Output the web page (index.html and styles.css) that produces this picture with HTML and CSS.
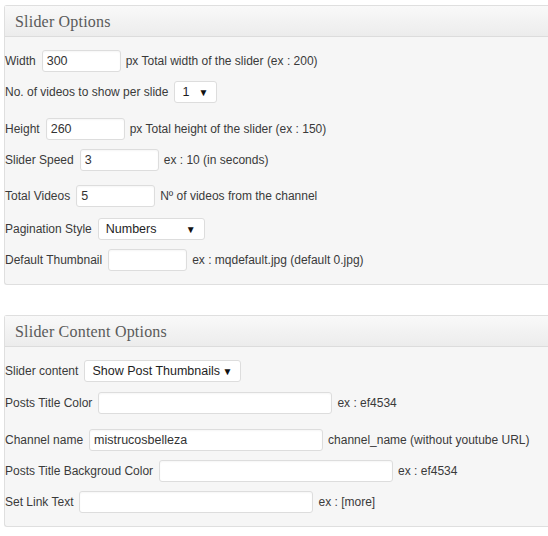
FILE: index.html
```html
<!DOCTYPE html>
<html>
<head>
<meta charset="utf-8">
<link rel="stylesheet" href="styles.css">
</head>
<body>
<div class="page">
  <div class="panel">
    <div class="panel-head">Slider Options</div>
    <div class="panel-body p1">
      <div class="row r-first"><span class="lbl">Width</span><span class="input short">300</span><span class="hint">px Total width of the slider (ex : 200)</span></div>
      <div class="row g9"><span class="lbl">No. of videos to show per slide</span><span class="select s-num"><span>1</span><span class="arrow">▼</span></span></div>
      <div class="row g15"><span class="lbl">Height</span><span class="input short">260</span><span class="hint">px Total height of the slider (ex : 150)</span></div>
      <div class="row g9"><span class="lbl">Slider Speed</span><span class="input short">3</span><span class="hint">ex : 10 (in seconds)</span></div>
      <div class="row g14"><span class="lbl">Total Videos</span><span class="input short">5</span><span class="hint">Nº of videos from the channel</span></div>
      <div class="row g11"><span class="lbl">Pagination Style</span><span class="select s-pag"><span>Numbers</span><span class="arrow">▼</span></span></div>
      <div class="row g9"><span class="lbl">Default Thumbnail</span><span class="input short"></span><span class="hint">ex : mqdefault.jpg (default 0.jpg)</span></div>
    </div>
  </div>

  <div class="panel second">
    <div class="panel-head">Slider Content Options</div>
    <div class="panel-body">
      <div class="row r-first"><span class="lbl">Slider content</span><span class="select s-content"><span>Show Post Thumbnails</span><span class="arrow">▼</span></span></div>
      <div class="row g10"><span class="lbl">Posts Title Color</span><span class="input long"></span><span class="hint">ex : ef4534</span></div>
      <div class="row g15"><span class="lbl">Channel name</span><span class="input long">mistrucosbelleza</span><span class="hint">channel_name (without youtube URL)</span></div>
      <div class="row g9"><span class="lbl">Posts Title Backgroud Color</span><span class="input long"></span><span class="hint">ex : ef4534</span></div>
      <div class="row g9"><span class="lbl">Set Link Text</span><span class="input long"></span><span class="hint">ex : [more]</span></div>
    </div>
  </div>
</div>
</body>
</html>
```

FILE: styles.css
```css
html, body {
  margin: 0;
  padding: 0;
  background: #ffffff;
  overflow: hidden;
}
body {
  width: 548px;
  height: 536px;
  font-family: "Liberation Sans", Arial, sans-serif;
  font-size: 12px;
  color: #3a3a3a;
}
.page {
  padding: 5px 0 0 4px;
}
.panel {
  width: 560px;
  border: 1px solid #dfdfdf;
  border-right: none;
  border-radius: 3px 0 0 3px;
  background: #f6f6f6;
}
.panel.second {
  margin-top: 30px;
}
.panel-head {
  height: 30px;
  line-height: 31px;
  padding-left: 10px;
  border-bottom: 1px solid #dcdcdc;
  background: linear-gradient(to bottom, #f9f9f9, #ececec);
  font-family: "Liberation Serif", "Times New Roman", serif;
  font-size: 16px;
  font-weight: normal;
  color: #5a5a5a;
  letter-spacing: 0.2px;
}
.panel-body {
  padding: 13px 0 13px 0;
}
.row {
  display: flex;
  align-items: center;
  height: 22px;
}
.g9 { margin-top: 9px; }
.g10 { margin-top: 10px; }
.g11 { margin-top: 11px; }
.g14 { margin-top: 14px; }
.g15 { margin-top: 15px; }
.lbl {
  margin-right: 6px;
}
.input {
  box-sizing: border-box;
  height: 22px;
  background: #ffffff;
  border: 1px solid #dddddd;
  border-radius: 3px;
  padding: 0 4px;
  font-size: 12.5px;
  line-height: 20px;
  color: #333333;
  box-shadow: inset 0 1px 2px rgba(0,0,0,0.04);
}
.input.short { width: 79px; }
.input.long { width: 234px; }
.hint {
  margin-left: 5px;
}
.select {
  box-sizing: border-box;
  height: 22px;
  display: flex;
  align-items: center;
  justify-content: space-between;
  background: #ffffff;
  border: 1px solid #dddddd;
  border-radius: 3px;
  padding: 0 8px 0 7px;
  font-size: 12.5px;
  color: #1e1e1e;
}
.select .arrow {
  font-size: 10px;
  color: #111111;
}
.s-num { width: 43px; }
.s-pag { width: 107px; }
.s-content { width: 157px; }
```
